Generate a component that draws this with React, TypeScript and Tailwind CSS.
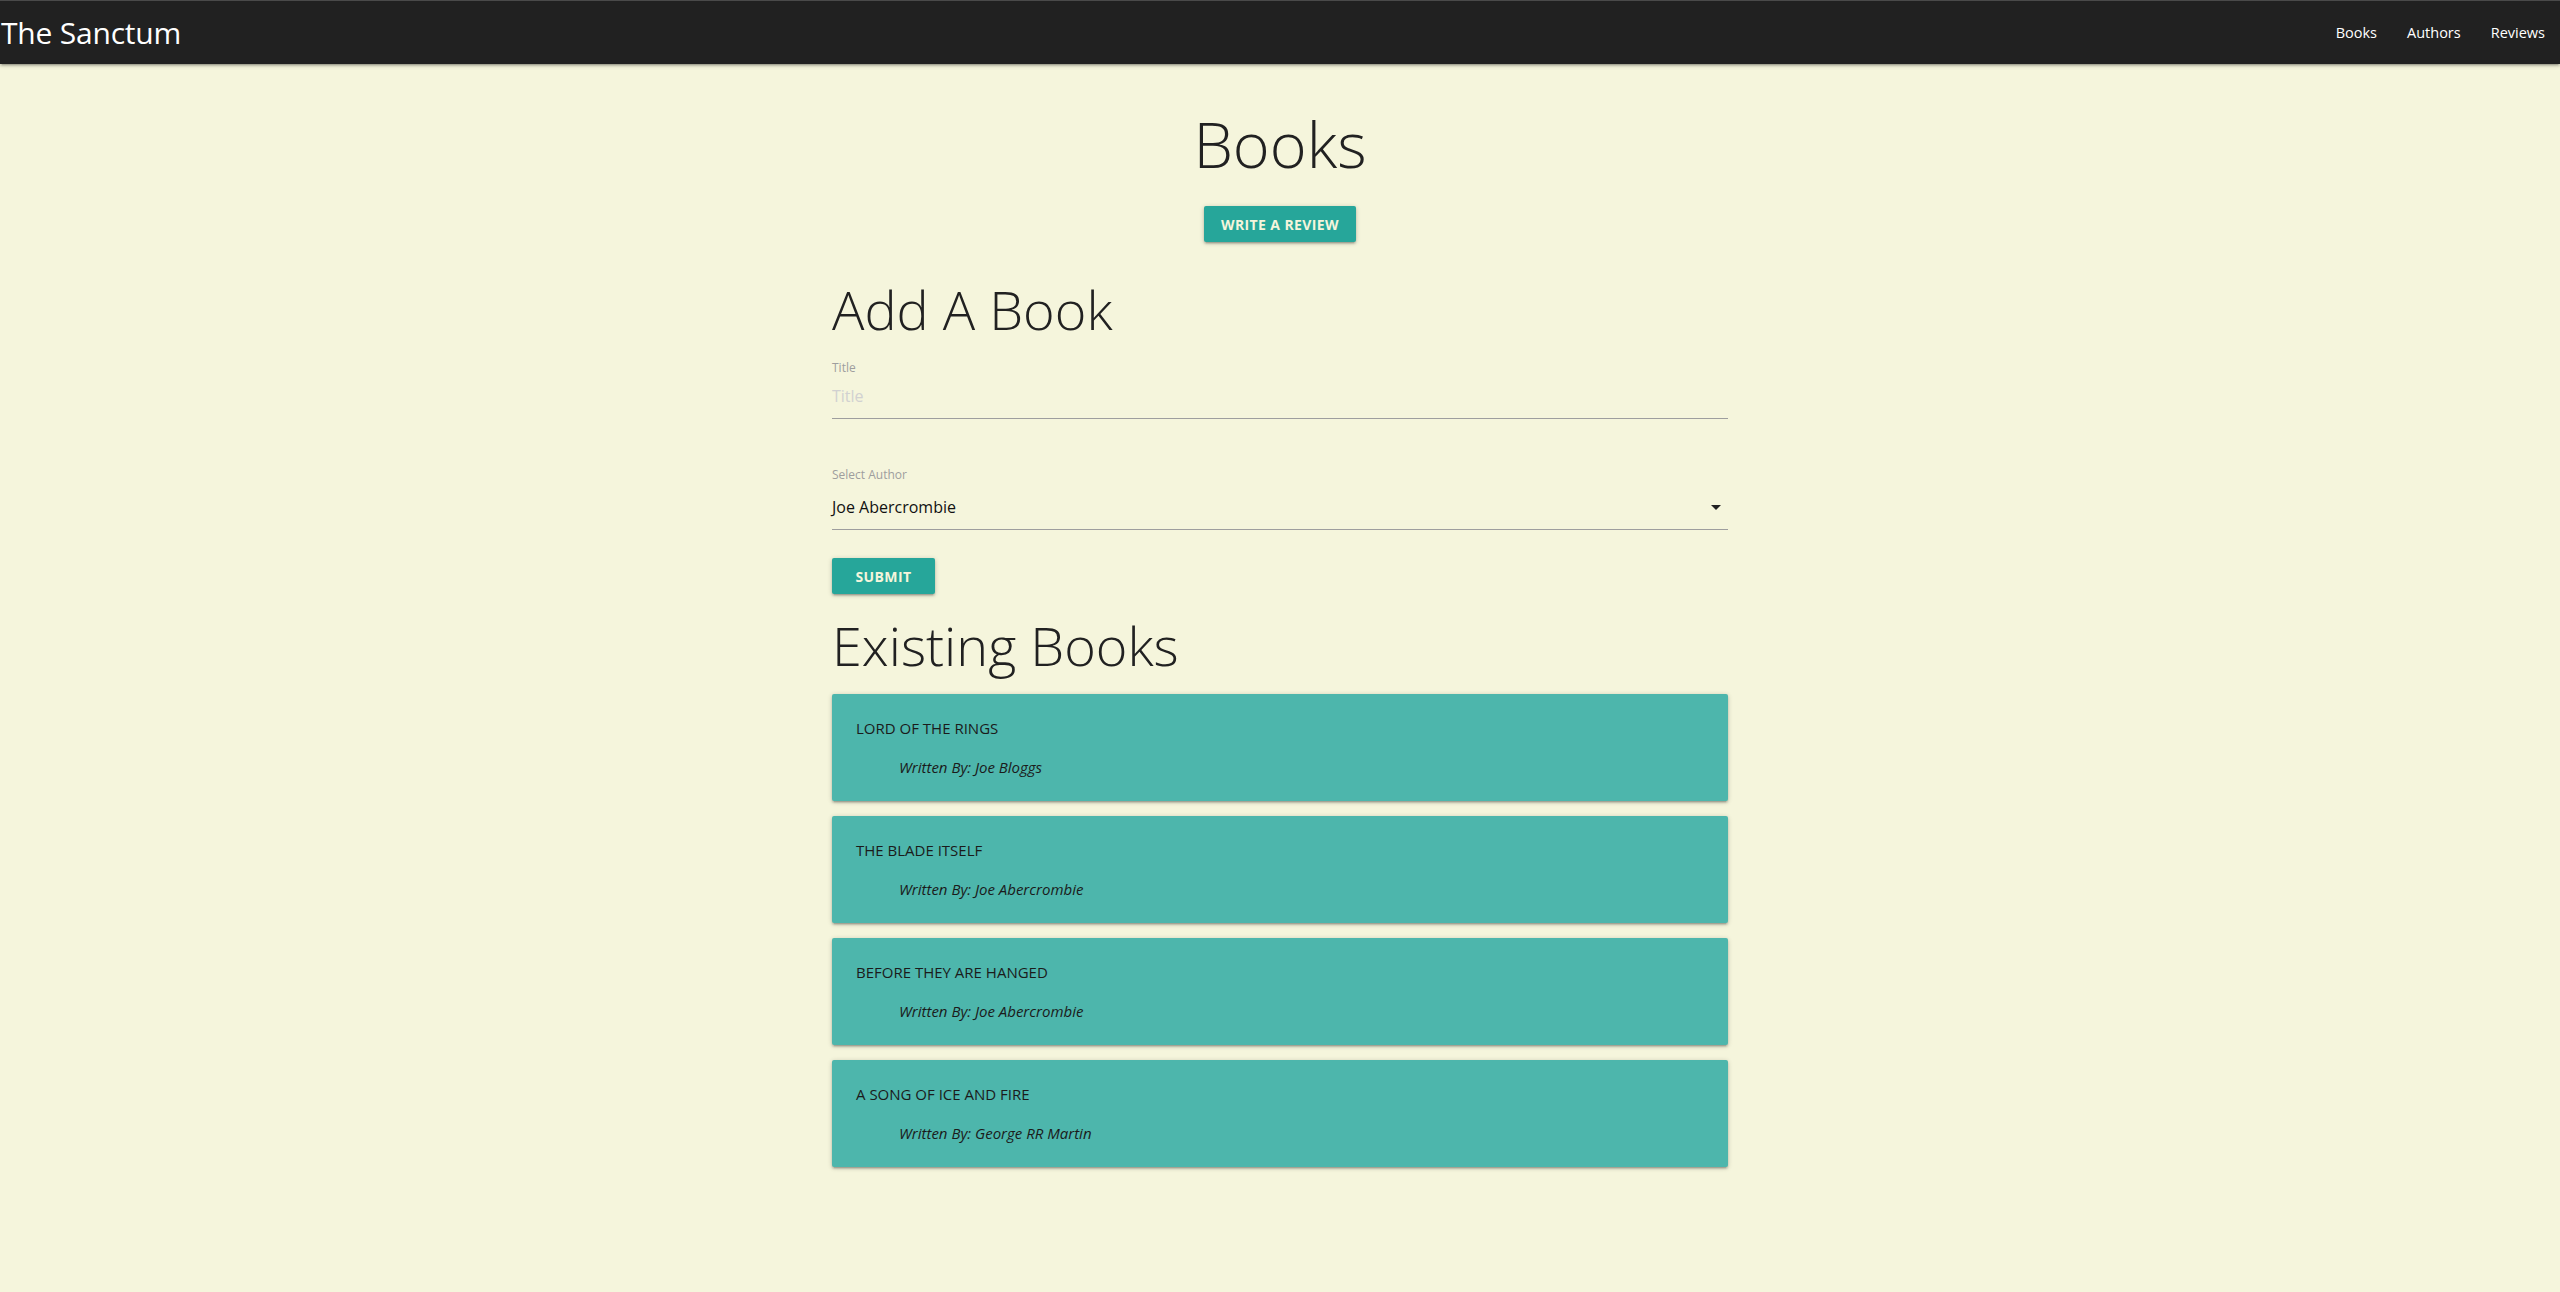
import { useState } from "react";

type Book = {
  title: string;
  author: string;
};

const books: Book[] = [
  { title: "Lord of the Rings", author: "Joe Bloggs" },
  { title: "The Blade Itself", author: "Joe Abercrombie" },
  { title: "Before They Are Hanged", author: "Joe Abercrombie" },
  { title: "A Song of Ice and Fire", author: "George RR Martin" },
];

function Navbar() {
  return (
    <nav className="relative z-10 flex h-16 items-center justify-between border-t border-[#4a4a4a] bg-[#212121] shadow-[0_2px_2px_0_rgba(0,0,0,0.14),0_3px_1px_-2px_rgba(0,0,0,0.12),0_1px_5px_0_rgba(0,0,0,0.2)]">
      <a href="#" className="pl-[1px] text-[30px] leading-none tracking-[-0.2px] text-white">
        The Sanctum
      </a>
      <ul className="flex h-full items-center">
        {["Books", "Authors", "Reviews"].map((item) => (
          <li key={item}>
            <a href="#" className="block px-[15px] text-[14.5px] text-white">
              {item}
            </a>
          </li>
        ))}
      </ul>
    </nav>
  );
}

function BookCard({ book }: { book: Book }) {
  return (
    <div className="rounded-[2px] bg-[#4db6ac] px-6 py-6 text-[#1b1b1b] shadow-[0_2px_2px_0_rgba(0,0,0,0.14),0_3px_1px_-2px_rgba(0,0,0,0.12),0_1px_5px_0_rgba(0,0,0,0.2)]">
      <p className="text-[15px] uppercase leading-5">{book.title}</p>
      <p className="mt-[19px] pl-[43px] text-[15px] italic leading-5">Written By: {book.author}</p>
    </div>
  );
}

export default function App() {
  const [title, setTitle] = useState("");

  return (
    <div className="min-h-screen bg-[#f5f5dc] font-['Open_Sans',sans-serif] text-[#212121]">
      <Navbar />
      <main className="mx-auto w-[896px] pb-16">
        <h1 className="mt-[43px] text-center text-[63px] font-light leading-[74px]">Books</h1>
        <div className="mt-[25px] flex justify-center">
          <button className="h-9 w-[152px] rounded-[2px] bg-[#26a69a] text-[14px] font-bold uppercase tracking-[0.4px] text-[#f5f5dc] shadow-[0_2px_2px_0_rgba(0,0,0,0.14),0_3px_1px_-2px_rgba(0,0,0,0.12),0_1px_5px_0_rgba(0,0,0,0.2)]">
            Write a review
          </button>
        </div>

        <h2 className="mt-[36px] text-[54px] font-light leading-[62px]">Add A Book</h2>

        <label className="mt-[20px] block text-[12px] leading-4 text-[#9e9e9e]">Title</label>
        <input
          value={title}
          onChange={(e) => setTitle(e.target.value)}
          placeholder="Title"
          className="mt-[5px] block h-[38px] w-full border-b border-[#9e9e9e] bg-transparent pb-[7px] text-[16px] outline-none placeholder:text-[#d1d1d1]"
        />

        <label className="mt-[48px] block text-[12px] leading-4 text-[#9e9e9e]">Select Author</label>
        <div className="mt-[7px] flex h-10 items-start justify-between border-b border-[#9e9e9e] pt-[5px]">
          <span className="text-[16px] leading-6 text-[#111]">Joe Abercrombie</span>
          <svg width="10" height="5" viewBox="0 0 10 5" className="mr-[7px] mt-[10px]">
            <path d="M0 0h10L5 5z" fill="#212121" />
          </svg>
        </div>

        <button className="mt-[28px] h-9 w-[103px] rounded-[2px] bg-[#26a69a] text-[14px] font-bold uppercase tracking-[0.4px] text-[#f5f5dc] shadow-[0_2px_2px_0_rgba(0,0,0,0.14),0_3px_1px_-2px_rgba(0,0,0,0.12),0_1px_5px_0_rgba(0,0,0,0.2)]">
          Submit
        </button>

        <h2 className="mt-[20px] text-[54px] font-light leading-[62px]">Existing Books</h2>

        <div className="mt-[18px] flex flex-col gap-[15px]">
          {books.map((book) => (
            <BookCard key={book.title} book={book} />
          ))}
        </div>
      </main>
    </div>
  );
}
